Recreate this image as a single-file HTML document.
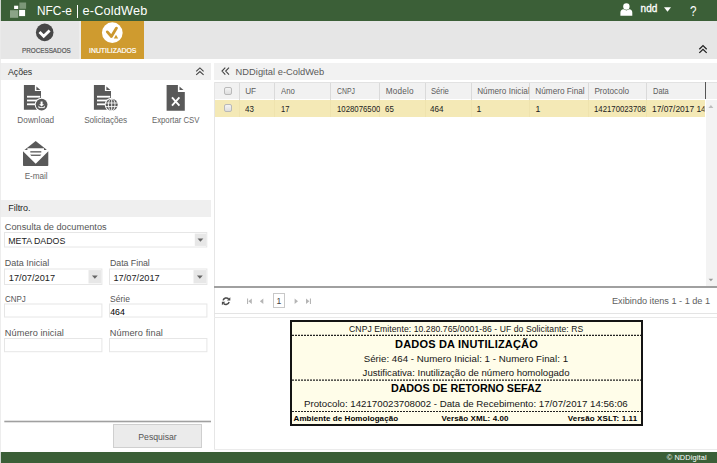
<!DOCTYPE html>
<html>
<head>
<meta charset="utf-8">
<style>
*{box-sizing:border-box;margin:0;padding:0}
html,body{width:717px;height:463px;overflow:hidden;background:#fff;font-family:"Liberation Sans",sans-serif}
.a{position:absolute}
.t{position:absolute;white-space:pre;font-family:"Liberation Sans",sans-serif}
#ov{position:absolute;left:0;top:0;width:717px;height:463px;pointer-events:none}
</style>
</head>
<body>
<div class="a" style="left:0px;top:0px;width:717px;height:21px;background:#3b5f37;"></div>
<div class="a" style="left:76.9px;top:5.2px;width:1.1px;height:12.8px;background:#fff;"></div>
<div class="a" style="left:0px;top:21px;width:717px;height:37.8px;background:#e6e6e6;"></div>
<div class="a" style="left:79px;top:21px;width:1.7px;height:37.8px;background:#ededed;"></div>
<div class="a" style="left:80.7px;top:21px;width:63.1px;height:37.8px;background:#cf9b2f;"></div>
<div class="a" style="left:0px;top:63.2px;width:210.8px;height:16.8px;background:#efefef;"></div>
<div class="a" style="left:214px;top:82px;width:1px;height:368px;background:#e6e6e6;"></div>
<div class="a" style="left:0px;top:199.5px;width:210.8px;height:17px;background:#efefef;"></div>
<div class="a" style="left:113.3px;top:424.3px;width:88.9px;height:23.7px;border:1px solid #cfcfcf;background:#ebebeb"></div>
<div class="a" style="left:214.4px;top:63.3px;width:503px;height:16.6px;background:#f2f2f2;"></div>
<div class="a" style="left:215px;top:82.4px;width:502px;height:17.1px;background:#f1f1f1;border-top:1px solid #e2e2e2;"></div>
<div class="a" style="left:215px;top:99.5px;width:490.4px;height:17.6px;background:#f4e9b6;"></div>
<div class="a" style="left:238.8px;top:83px;width:1px;height:16.5px;background:#dadada;"></div>
<div class="a" style="left:238.8px;top:99.5px;width:1px;height:17.6px;background:#efe3ae;"></div>
<div class="a" style="left:274.1px;top:83px;width:1px;height:16.5px;background:#dadada;"></div>
<div class="a" style="left:274.1px;top:99.5px;width:1px;height:17.6px;background:#efe3ae;"></div>
<div class="a" style="left:330.0px;top:83px;width:1px;height:16.5px;background:#dadada;"></div>
<div class="a" style="left:330.0px;top:99.5px;width:1px;height:17.6px;background:#efe3ae;"></div>
<div class="a" style="left:379.3px;top:83px;width:1px;height:16.5px;background:#dadada;"></div>
<div class="a" style="left:379.3px;top:99.5px;width:1px;height:17.6px;background:#efe3ae;"></div>
<div class="a" style="left:425.1px;top:83px;width:1px;height:16.5px;background:#dadada;"></div>
<div class="a" style="left:425.1px;top:99.5px;width:1px;height:17.6px;background:#efe3ae;"></div>
<div class="a" style="left:471.1px;top:83px;width:1px;height:16.5px;background:#dadada;"></div>
<div class="a" style="left:471.1px;top:99.5px;width:1px;height:17.6px;background:#efe3ae;"></div>
<div class="a" style="left:529.4px;top:83px;width:1px;height:16.5px;background:#dadada;"></div>
<div class="a" style="left:529.4px;top:99.5px;width:1px;height:17.6px;background:#efe3ae;"></div>
<div class="a" style="left:587.8px;top:83px;width:1px;height:16.5px;background:#dadada;"></div>
<div class="a" style="left:587.8px;top:99.5px;width:1px;height:17.6px;background:#efe3ae;"></div>
<div class="a" style="left:645.9px;top:83px;width:1px;height:16.5px;background:#dadada;"></div>
<div class="a" style="left:645.9px;top:99.5px;width:1px;height:17.6px;background:#efe3ae;"></div>
<div class="a" style="left:704.9px;top:82.4px;width:1px;height:17.1px;background:#555;"></div>
<div class="a" style="left:705.9px;top:99.5px;width:11.1px;height:186.7px;background:#f3f3f3;"></div>
<div class="a" style="left:223.6px;top:87.3px;width:8px;height:7.6px;border:1px solid #b9b9b9;border-radius:2px;background:linear-gradient(#f4f4f4,#dedede)"></div>
<div class="a" style="left:223.6px;top:104.2px;width:8px;height:7.6px;border:1px solid #b9b9b9;border-radius:2px;background:linear-gradient(#f4f4f4,#dedede)"></div>
<div class="a" style="left:214.4px;top:286.2px;width:502.6px;height:1.8px;background:#a0a0a0;"></div>
<div class="a" style="left:214.4px;top:313px;width:502.6px;height:1px;background:#e4e4e4;"></div>
<div class="a" style="left:214.4px;top:316.8px;width:502.6px;height:1px;background:#e9e9e9;"></div>
<div class="a" style="left:214.4px;top:449px;width:502.6px;height:1px;background:#ebebeb;"></div>
<div class="a" style="left:273.3px;top:293px;width:11.4px;height:15.2px;border:1px solid #c8c8c8;background:#fff"></div>
<div class="a" style="left:290px;top:320px;width:353px;height:106px;border:2px solid #141414;background:#fffde9"></div>
<div class="a" style="left:0px;top:451.7px;width:717px;height:11.3px;background:#3b5f37;"></div>
<div class="a" style="left:0;top:0;width:1px;height:463px;background:rgba(234,234,234,0.85)"></div>
<svg id="ov" width="717" height="463" viewBox="0 0 717 463">
<rect x="19.4" y="2.5" width="6.7" height="6.3" fill="#7c9778"/>
<rect x="14.1" y="5.7" width="4.1" height="3.3" fill="#fff"/>
<rect x="10" y="10.2" width="8.2" height="7.6" fill="#8ba487"/>
<rect x="19.1" y="9.9" width="6" height="6.2" fill="#fff"/>
<circle cx="626.4" cy="6.5" r="3.2" fill="#fff"/>
<path d="M620.4 15.8 V12.6 Q620.4 9.4 623.6 9.2 L626.4 10.6 L629.2 9.2 Q632.3 9.4 632.3 12.6 V15.8 Z" fill="#fff"/>
<path d="M664 7.3 H671 L667.5 11.7 Z" fill="#fff"/>
<circle cx="44.7" cy="32.4" r="8.8" fill="#474747"/>
<path d="M39.5 32.1 L43.7 36.3 L49.6 30.4" stroke="#fff" stroke-width="2.8" fill="none"/>
<circle cx="112.3" cy="32.7" r="10.35" fill="#fff"/>
<path d="M107.3 31.9 L111.4 36.5 L116.5 28.1" stroke="#cb972d" stroke-width="2.8" stroke-linecap="round" stroke-linejoin="round" fill="none"/>
<path d="M116 34.7 L118.2 38.6 H113.8 Z" fill="#cf9b2f"/>
<path d="M699.3 49.2 L703 45.6 L706.7 49.2 M699.3 52.9 L703 49.3 L706.7 52.9" stroke="#222" stroke-width="1.3" fill="none"/>
<path d="M196.2 71.3 L199.9 67.9 L203.6 71.3 M196.2 74.9 L199.9 71.5 L203.6 74.9" stroke="#444" stroke-width="1.1" fill="none"/>
<path d="M23.9 85 H34.9 V91 H41.0 V109.7 H23.9 Z" fill="#595959"/>
<path d="M36.4 86.5 L40.4 89.9 H36.4 Z" fill="#595959"/>
<rect x="27.0" y="95.8" width="13.2" height="1.8" fill="#fff"/>
<rect x="27.0" y="99.6" width="13.2" height="1.8" fill="#fff"/>
<rect x="27.0" y="103.4" width="13.2" height="1.8" fill="#fff"/>
<circle cx="41.6" cy="104.6" r="6.9" fill="#fff"/>
<circle cx="41.6" cy="104.6" r="5.9" fill="#595959"/>
<path d="M40.6 101.6 H42.6 V104.2 H44.1 L41.6 106.5 L39.1 104.2 H40.6 Z" fill="#fff"/>
<path d="M38.9 105.9 V107.6 H44.3 V105.9" stroke="#fff" stroke-width="0.9" fill="none"/>
<path d="M93.9 85 H104.9 V91 H111.0 V109.7 H93.9 Z" fill="#595959"/>
<path d="M106.4 86.5 L110.4 89.9 H106.4 Z" fill="#595959"/>
<rect x="97.0" y="95.8" width="13.2" height="1.8" fill="#fff"/>
<rect x="97.0" y="99.6" width="13.2" height="1.8" fill="#fff"/>
<rect x="97.0" y="103.4" width="13.2" height="1.8" fill="#fff"/>
<circle cx="111.7" cy="104.8" r="7" fill="#fff"/>
<circle cx="111.7" cy="104.8" r="6" fill="#595959"/>
<path d="M111.7 98.8 V110.8 M105.7 103 H117.7 M105.7 106.6 H117.7" stroke="#fff" stroke-width="0.9" fill="none"/>
<ellipse cx="111.7" cy="104.8" rx="3.3" ry="6" stroke="#fff" stroke-width="0.9" fill="none"/>
<path d="M166.6 85 H177.9 V92.1 H184.8 V110.7 H166.6 Z" fill="#595959"/>
<path d="M179.5 86.5 L183.5 90.1 H179.5 Z" fill="#595959"/>
<path d="M172 97.4 L179.4 105.6 M179.4 97.4 L172 105.6" stroke="#fff" stroke-width="1.9" fill="none"/>
<path d="M35.7 141 L47 150 H24.4 Z" fill="#595959"/>
<path d="M27.4 148.2 H44 V153.4 L35.7 161.6 L27.4 153.4 Z" fill="#fff"/>
<rect x="30.3" y="151.2" width="11" height="1.3" fill="#595959"/>
<rect x="30.3" y="154.6" width="11" height="1.3" fill="#595959"/>
<path d="M24.4 150 L35.7 161.6 L47 150" stroke="#fff" stroke-width="1.6" fill="none"/>
<path d="M23 151.2 L35.7 163.7 L48.3 151.2 V165.3 Q48.3 166.1 47.5 166.1 H23.8 Q23 166.1 23 165.3 Z" fill="#595959"/>
<rect x="4.5" y="232.5" width="202.3" height="14.5" fill="#fff" stroke="#e6e6e6" stroke-width="1"/>
<rect x="194.8" y="233.6" width="11.3" height="12.3" fill="#e7e7e7"/>
<path d="M197.55 238.45000000000002 H203.35000000000002 L200.45000000000002 241.75 Z" fill="#666"/>
<rect x="4.5" y="269.0" width="97.4" height="15.5" fill="#fff" stroke="#e6e6e6" stroke-width="1"/>
<rect x="88.5" y="270.1" width="12.7" height="13.3" fill="#e7e7e7"/>
<path d="M91.94999999999999 275.45 H97.75 L94.85 278.75 Z" fill="#666"/>
<rect x="109.5" y="269.0" width="97.4" height="15.5" fill="#fff" stroke="#e6e6e6" stroke-width="1"/>
<rect x="193.50000000000003" y="270.1" width="12.7" height="13.3" fill="#e7e7e7"/>
<path d="M196.95000000000002 275.45 H202.75000000000003 L199.85000000000002 278.75 Z" fill="#666"/>
<rect x="4.5" y="304.0" width="97.4" height="13" fill="#fff" stroke="#e6e6e6" stroke-width="1"/>
<rect x="109.5" y="304.0" width="97.4" height="13" fill="#fff" stroke="#e6e6e6" stroke-width="1"/>
<rect x="4.5" y="338.5" width="97.4" height="13.2" fill="#fff" stroke="#e6e6e6" stroke-width="1"/>
<rect x="109.5" y="338.5" width="97.4" height="13.2" fill="#fff" stroke="#e6e6e6" stroke-width="1"/>
<rect x="4.3" y="420.7" width="206.7" height="1.6" fill="#a0a0a0"/>
<path d="M225.3 67.6 L222 71.1 L225.3 74.6 M229 67.6 L225.7 71.1 L229 74.6" stroke="#444" stroke-width="1.1" fill="none"/>
<path d="M708.4 108.1 L710.9 105.1 L713.4 108.1 Z" fill="#bdbdbd"/>
<path d="M708.6 278.8 H713.2 L710.9 281.3 Z" fill="#9a9a9a"/>
<path d="M223.1 300.4 A3.3 3.3 0 0 1 228.6 298.9" stroke="#4a4a4a" stroke-width="1.5" fill="none"/>
<path d="M229.1 302 A3.3 3.3 0 0 1 223.6 303.5" stroke="#4a4a4a" stroke-width="1.5" fill="none"/>
<path d="M230.3 297.2 V300.6 H226.9 Z" fill="#4a4a4a"/>
<path d="M221.9 305.2 V301.8 H225.3 Z" fill="#4a4a4a"/>
<path d="M247 298.5 H248.1 V304 H247 Z M251.8 298.5 V304 L248.4 301.25 Z" fill="#b5b5b5"/>
<path d="M263.3 298.5 V304 L259.9 301.25 Z" fill="#b5b5b5"/>
<path d="M294.6 298.5 V304 L298 301.25 Z" fill="#b5b5b5"/>
<path d="M306 298.5 V304 L309.4 301.25 Z M309.9 298.5 H311 V304 H309.9 Z" fill="#b5b5b5"/>
<path d="M292 335.4 H641" stroke="#222" stroke-width="1.1" stroke-dasharray="2 1" fill="none"/>
<path d="M292 380.1 H641" stroke="#222" stroke-width="1.1" stroke-dasharray="2 1" fill="none"/>
<path d="M292 411.5 H641" stroke="#222" stroke-width="1.1" stroke-dasharray="2 1" fill="none"/>
</svg>
<div class="t" style="left:36.70px;top:5px;font-size:12.7px;line-height:12.7px;color:#fff;transform-origin:0 10px;transform:scale(0.9360,1.0000);">NFC-e</div>
<div class="t" style="left:82.60px;top:5px;font-size:12.7px;line-height:12.7px;color:#fff;letter-spacing:0.178px;">e-ColdWeb</div>
<div class="t" style="left:640.60px;top:4px;font-size:10px;line-height:10px;color:#fff;letter-spacing:0.005px;-webkit-text-stroke:0.3px #fff;">ndd</div>
<div class="t" style="left:690.10px;top:3px;font-size:15.4px;line-height:15.4px;color:#fff;transform-origin:0 13px;transform:scale(0.7588,1.0000);">?</div>
<div class="t" style="left:22.10px;top:47px;font-size:7.6px;line-height:7.6px;color:#555;transform-origin:0 6px;transform:scale(0.8313,1.0000);-webkit-text-stroke:0.2px #555;">PROCESSADOS</div>
<div class="t" style="left:88.50px;top:47px;font-size:7.6px;line-height:7.6px;color:#fff;transform-origin:0 6px;transform:scale(0.9072,1.0000);-webkit-text-stroke:0.2px #fff;">INUTILIZADOS</div>
<div class="t" style="left:8.00px;top:68px;font-size:8.8px;line-height:8.8px;color:#2c2c2c;letter-spacing:-0.052px;">Ações</div>
<div class="t" style="left:17.30px;top:117px;font-size:8.2px;line-height:8.2px;color:#666;letter-spacing:0.066px;">Download</div>
<div class="t" style="left:84.20px;top:117px;font-size:8.2px;line-height:8.2px;color:#666;letter-spacing:-0.063px;">Solicitações</div>
<div class="t" style="left:151.95px;top:117px;font-size:8.2px;line-height:8.2px;color:#666;transform-origin:0 6px;transform:scale(0.9476,1.0000);">Exportar CSV</div>
<div class="t" style="left:24.75px;top:173px;font-size:8.2px;line-height:8.2px;color:#666;letter-spacing:-0.089px;">E-mail</div>
<div class="t" style="left:8.30px;top:204px;font-size:9px;line-height:9px;color:#262626;letter-spacing:-0.043px;">Filtro.</div>
<div class="t" style="left:4.80px;top:223px;font-size:9.2px;line-height:9.2px;color:#555;letter-spacing:0.010px;">Consulta de documentos</div>
<div class="t" style="left:8.30px;top:237px;font-size:8.8px;line-height:8.8px;color:#222;letter-spacing:-0.005px;">META DADOS</div>
<div class="t" style="left:4.80px;top:259px;font-size:9.0px;line-height:9.0px;color:#555;letter-spacing:-0.010px;">Data Inicial</div>
<div class="t" style="left:110.00px;top:259px;font-size:8.8px;line-height:8.8px;color:#555;letter-spacing:-0.031px;">Data Final</div>
<div class="t" style="left:8.80px;top:274px;font-size:9.2px;line-height:9.2px;color:#222;letter-spacing:0.035px;">17/07/2017</div>
<div class="t" style="left:113.40px;top:274px;font-size:9.2px;line-height:9.2px;color:#222;letter-spacing:0.035px;">17/07/2017</div>
<div class="t" style="left:4.60px;top:295px;font-size:9.0px;line-height:9.0px;color:#555;transform-origin:0 7px;transform:scale(0.8850,1.0000);">CNPJ</div>
<div class="t" style="left:109.50px;top:295px;font-size:9.0px;line-height:9.0px;color:#555;transform-origin:0 7px;transform:scale(0.9471,1.0000);">Série</div>
<div class="t" style="left:110.20px;top:308px;font-size:8.75px;line-height:8.75px;color:#000;">464</div>
<div class="t" style="left:4.80px;top:329px;font-size:9.2px;line-height:9.2px;color:#555;letter-spacing:0.065px;">Número inicial</div>
<div class="t" style="left:109.70px;top:329px;font-size:9.2px;line-height:9.2px;color:#555;letter-spacing:0.104px;">Número final</div>
<div class="t" style="left:138.30px;top:433px;font-size:8.7px;line-height:8.7px;color:#555;letter-spacing:-0.021px;">Pesquisar</div>
<div class="t" style="left:235.60px;top:68px;font-size:9.3px;line-height:9.3px;color:#5a5a5a;letter-spacing:0.026px;">NDDigital e-ColdWeb</div>
<div class="t" style="left:245.20px;top:88px;font-size:8.2px;line-height:8.2px;color:#5c5c5c;">UF</div>
<div class="t" style="left:280.70px;top:88px;font-size:8.2px;line-height:8.2px;color:#5c5c5c;transform-origin:0 6px;transform:scale(0.9458,1.0000);">Ano</div>
<div class="t" style="left:336.70px;top:88px;font-size:8.2px;line-height:8.2px;color:#5c5c5c;transform-origin:0 6px;transform:scale(0.8359,1.0000);">CNPJ</div>
<div class="t" style="left:385.80px;top:88px;font-size:8.2px;line-height:8.2px;color:#5c5c5c;letter-spacing:0.168px;">Modelo</div>
<div class="t" style="left:431.10px;top:88px;font-size:8.2px;line-height:8.2px;color:#5c5c5c;transform-origin:0 6px;transform:scale(0.9351,1.0000);">Série</div>
<div class="t" style="left:477.20px;top:88px;font-size:8.2px;line-height:8.2px;color:#5c5c5c;letter-spacing:0.014px;width:52.10px;clip-path:inset(-4px 0 -4px 0);">Número Inicial</div>
<div class="t" style="left:535.30px;top:88px;font-size:8.2px;line-height:8.2px;color:#5c5c5c;letter-spacing:0.015px;">Número Final</div>
<div class="t" style="left:594.40px;top:88px;font-size:8.2px;line-height:8.2px;color:#5c5c5c;letter-spacing:0.018px;">Protocolo</div>
<div class="t" style="left:652.80px;top:88px;font-size:8.2px;line-height:8.2px;color:#5c5c5c;transform-origin:0 6px;transform:scale(0.9122,1.0000);">Data</div>
<div class="t" style="left:245.20px;top:105px;font-size:8.7px;line-height:8.7px;color:#222;transform-origin:0 7px;transform:scale(0.9197,1.0000);">43</div>
<div class="t" style="left:280.60px;top:105px;font-size:8.7px;line-height:8.7px;color:#222;transform-origin:0 7px;transform:scale(0.8680,1.0000);">17</div>
<div class="t" style="left:336.50px;top:105px;font-size:8.7px;line-height:8.7px;color:#222;transform-origin:0 7px;transform:scale(0.8961,1.0000);width:48.10px;clip-path:inset(-4px 0 -4px 0);">10280765000186</div>
<div class="t" style="left:385.10px;top:105px;font-size:8.7px;line-height:8.7px;color:#222;transform-origin:0 7px;transform:scale(0.9093,1.0000);">65</div>
<div class="t" style="left:430.30px;top:105px;font-size:8.7px;line-height:8.7px;color:#222;transform-origin:0 7px;transform:scale(0.9300,1.0000);">464</div>
<div class="t" style="left:476.40px;top:105px;font-size:8.7px;line-height:8.7px;color:#222;">1</div>
<div class="t" style="left:535.40px;top:105px;font-size:8.7px;line-height:8.7px;color:#222;">1</div>
<div class="t" style="left:594.20px;top:105px;font-size:8.7px;line-height:8.7px;color:#222;transform-origin:0 7px;transform:scale(0.8956,1.0000);width:58.06px;clip-path:inset(-4px 0 -4px 0);">142170023708002</div>
<div class="t" style="left:652.40px;top:105px;font-size:8.7px;line-height:8.7px;color:#222;transform-origin:0 7px;transform:scale(0.9684,1.0000);width:54.22px;clip-path:inset(-4px 0 -4px 0);">17/07/2017 14:56:06</div>
<div class="t" style="left:276.61px;top:297px;font-size:8.6px;line-height:8.6px;color:#444;">1</div>
<div class="t" style="left:612.00px;top:297px;font-size:9.2px;line-height:9.2px;color:#5e5e5e;letter-spacing:-0.020px;">Exibindo itens 1 - 1 de 1</div>
<div class="t" style="left:349.10px;top:325px;font-size:8.6px;line-height:8.6px;color:#151515;letter-spacing:0.070px;">CNPJ Emitente: 10.280.765/0001-86 - UF do Solicitante: RS</div>
<div class="t" style="left:395.00px;top:339px;font-size:11px;line-height:11px;color:#000;letter-spacing:0.194px;font-weight:bold;">DADOS DA INUTILIZAÇÃO</div>
<div class="t" style="left:363.65px;top:354px;font-size:9.7px;line-height:9.7px;color:#151515;letter-spacing:0.030px;">Série: 464 - Numero Inicial: 1 - Numero Final: 1</div>
<div class="t" style="left:362.60px;top:368px;font-size:9.6px;line-height:9.6px;color:#151515;">Justificativa: Inutilização de número homologado</div>
<div class="t" style="left:390.90px;top:383px;font-size:10.8px;line-height:10.8px;color:#000;letter-spacing:-0.055px;font-weight:bold;">DADOS DE RETORNO SEFAZ</div>
<div class="t" style="left:304.00px;top:399px;font-size:9.7px;line-height:9.7px;color:#151515;">Protocolo: 142170023708002 - Data de Recebimento: 17/07/2017 14:56:06</div>
<div class="t" style="left:293.60px;top:415px;font-size:8px;line-height:8px;color:#000;letter-spacing:0.060px;font-weight:bold;transform-origin:0 6px;transform:scale(1.0000,0.8800);">Ambiente de Homologação</div>
<div class="t" style="left:441.50px;top:415px;font-size:8px;line-height:8px;color:#000;letter-spacing:0.074px;font-weight:bold;transform-origin:0 6px;transform:scale(1.0000,0.8800);">Versão XML: 4.00</div>
<div class="t" style="left:567.80px;top:415px;font-size:8px;line-height:8px;color:#000;letter-spacing:0.121px;font-weight:bold;transform-origin:0 6px;transform:scale(1.0000,0.8800);">Versão XSLT: 1.11</div>
<div class="t" style="left:666.70px;top:454px;font-size:7.4px;line-height:7.4px;color:#fff;letter-spacing:0.113px;">© NDDigital</div>
</body>
</html>
